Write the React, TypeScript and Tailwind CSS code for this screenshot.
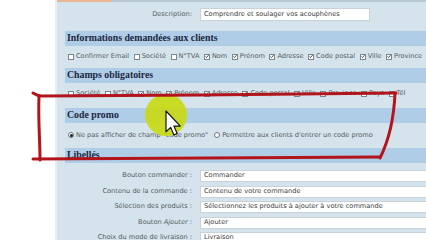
import React from "react";

const body = { fontFamily: '"DejaVu Sans", Verdana, sans-serif' };
const head = { fontFamily: '"Liberation Serif", Georgia, serif' };

function Box({ checked }: { checked?: boolean }) {
  return (
    <span className="inline-flex w-[6px] h-[6px] shrink-0 border border-[#7d868d] bg-white items-center justify-center">
      {checked && (
        <svg width="5" height="5" viewBox="0 0 5 5">
          <path d="M0.6 2.6 L1.9 3.9 L4.4 0.8" stroke="#222" strokeWidth="1" fill="none" />
        </svg>
      )}
    </span>
  );
}

function Check({ label, checked }: { label: string; checked?: boolean }) {
  return (
    <span className="inline-flex items-center gap-[2px] mr-[4.5px]">
      <Box checked={checked} />
      <span>{label}</span>
    </span>
  );
}

function Header({ children }: { children: React.ReactNode }) {
  return (
    <div
      className="h-[15px] bg-[#b0cde8] flex items-center pl-[2px] text-[9.8px] font-bold text-[#1b2740] whitespace-nowrap"
      style={head}
    >
      {children}
    </div>
  );
}

function Row({ label, value }: { label: React.ReactNode; value: string }) {
  return (
    <div className="flex items-center h-[12px]">
      <div className="w-[127px] shrink-0 text-right whitespace-nowrap">{label}</div>
      <div className="ml-[8px] w-[240px] shrink-0 h-[12px] bg-white border border-[#c9d2d8] flex items-center pl-[3px] whitespace-nowrap text-[#3a3a3a]">
        {value}
      </div>
    </div>
  );
}

export default function App() {
  return (
    <div className="relative w-[426px] h-[240px] overflow-hidden bg-white flex text-[6.6px] text-[#555b60]" style={body}>
      <div className="w-[55px] shrink-0 bg-white" />
      <div className="flex-1 min-w-0 bg-[#d4e3ec] border-l-2 border-[#e8eff3] flex flex-col">
        <div className="flex h-[2px] shrink-0">
          <div className="w-[55px] bg-[#e9b592]" />
          <div className="flex-1 bg-[#b7c8d4]" />
        </div>
        <div className="pl-[8px] flex flex-col">
          {/* Description */}
          <div className="flex items-center h-[13px] mt-[6px]">
            <div className="w-[127px] shrink-0 text-right whitespace-nowrap">Description:</div>
            <div className="ml-[8px] w-[170px] h-[13px] bg-white border border-[#c9d2d8] flex items-center pl-[3px] whitespace-nowrap text-[#3a3a3a]">
              Comprendre et soulager vos acouphènes
            </div>
          </div>
          <div className="h-[10px]" />
          <Header>Informations demandées aux clients</Header>
          <div className="h-[22px] flex items-center pl-[3px] whitespace-nowrap">
            <Check label="Confirmer Email" />
            <Check label="Société" />
            <Check label="N°TVA" />
            <Check label="Nom" checked />
            <Check label="Prénom" checked />
            <Check label="Adresse" checked />
            <Check label="Code postal" checked />
            <Check label="Ville" checked />
            <Check label="Province" checked />
          </div>
          <Header>Champs obligatoires</Header>
          <div className="h-[25px] flex items-start pt-[6px] pl-[3px] whitespace-nowrap">
            <Check label="Société" />
            <Check label="N°TVA" />
            <Check label="Nom" checked />
            <Check label="Prénom" checked />
            <Check label="Adresse" checked />
            <Check label="Code postal" checked />
            <Check label="Ville" checked />
            <Check label="Province" />
            <Check label="Pays" checked />
            <Check label="Tél" />
          </div>
          <Header>Code promo</Header>
          <div className="h-[25px] flex items-center pl-[3px] whitespace-nowrap">
            <span className="inline-flex items-center gap-[2px] mr-[6px]">
              <span className="w-[6px] h-[6px] rounded-full border border-[#6d757b] bg-white flex items-center justify-center">
                <span className="w-[3px] h-[3px] rounded-full bg-[#222]" />
              </span>
              <span>Ne pas afficher de champ "code promo"</span>
            </span>
            <span className="inline-flex items-center gap-[2px]">
              <span className="w-[6px] h-[6px] rounded-full border border-[#6d757b] bg-white" />
              <span>Permettre aux clients d'entrer un code promo</span>
            </span>
          </div>
          <Header>Libellés</Header>
          <div className="flex flex-col gap-[3.5px] mt-[7px]">
            <Row label="Bouton commander :" value="Commander" />
            <Row label="Contenu de la commande :" value="Contenu de votre commande" />
            <Row label="Sélection des produits :" value="Sélectionnez les produits à ajouter à votre commande" />
            <Row label={<span>Bouton <i>Ajouter</i> :</span>} value="Ajouter" />
            <Row label="Choix du mode de livraison :" value="Livraison" />
          </div>
        </div>
      </div>

      <svg className="absolute inset-0 pointer-events-none" width="426" height="240" viewBox="0 0 426 240">
        <circle cx="166" cy="115" r="21" fill="#c9d910" fillOpacity="0.9" />
        <g stroke="#b3141c" strokeWidth="3" fill="none" strokeLinecap="round">
          <path d="M33 93 C36 95 38 96 42 96 L200 95 L396 93" />
          <path d="M39 96 C38 120 40 140 40 160" />
          <path d="M33 159 L380 157" />
          <path d="M395 93 C394 118 389 140 380 158" />
        </g>
        <g transform="translate(166 111) scale(1.3)">
          <path d="M0 0 L0 16 L3.6 12.6 L6.1 18.4 L8.6 17.3 L6.1 11.6 L11 11.6 Z" fill="#ffffff" stroke="#111" strokeWidth="0.9" strokeLinejoin="round" />
        </g>
      </svg>
    </div>
  );
}
